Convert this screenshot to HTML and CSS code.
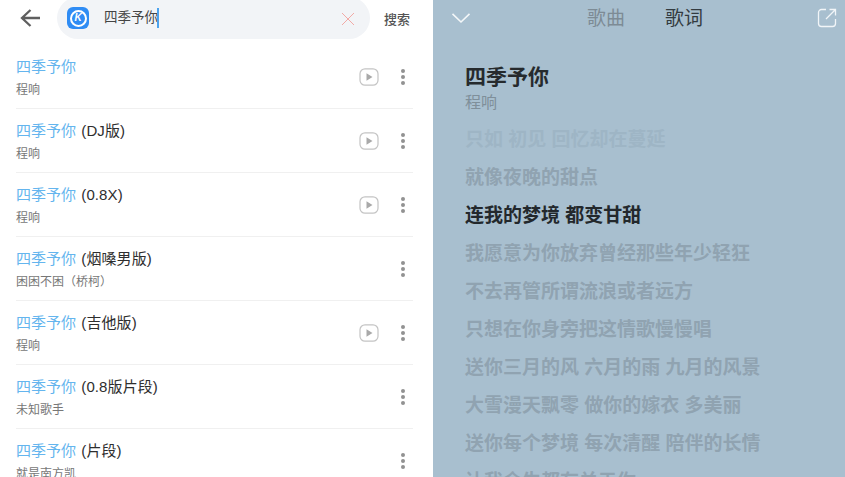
FILE: index.html
```html
<!DOCTYPE html>
<html lang="zh">
<head>
<meta charset="utf-8">
<title>四季予你</title>
<link rel="stylesheet" href="styles.css">
</head>
<body>
<div class="app">
  <section class="left">
    <header class="topbar">
      <svg class="back" width="22" height="20" viewBox="0 0 22 20"><path d="M20 10H2M10.500 2 2 10l8.500 8" fill="none" stroke="#5f5f5f" stroke-width="2.300"/></svg>
      <div class="search">
        <span class="logo"><span class="logo-ring"><span class="logo-k">K</span></span></span>
        <span class="query">四季予你</span><span class="caret"></span>
        <svg class="clear" width="14" height="14" viewBox="0 0 14 14"><path d="M1 1l12 12M13 1 1 13" stroke="#f2aaa6" stroke-width="1" fill="none"/></svg>
      </div>
      <span class="go">搜索</span>
    </header>
    <ul class="list">
      <li class="row">
        <div class="info"><div class="title"><em>四季予你</em></div><div class="artist">程响</div></div>
        <svg class="play" width="20" height="18" viewBox="0 0 20 18"><rect x="1" y="0.800" width="18" height="16.400" rx="5" fill="none" stroke="#c4c4c4" stroke-width="1.200"/><path d="M7.500 5.200v7.600L13.500 9z" fill="#a9a9a9"/></svg>
        <span class="more"><i></i><i></i><i></i></span>
      </li>
      <li class="row">
        <div class="info"><div class="title"><em>四季予你</em> (DJ版)</div><div class="artist">程响</div></div>
        <svg class="play" width="20" height="18" viewBox="0 0 20 18"><rect x="1" y="0.800" width="18" height="16.400" rx="5" fill="none" stroke="#c4c4c4" stroke-width="1.200"/><path d="M7.500 5.200v7.600L13.500 9z" fill="#a9a9a9"/></svg>
        <span class="more"><i></i><i></i><i></i></span>
      </li>
      <li class="row">
        <div class="info"><div class="title"><em>四季予你</em> (0.8X)</div><div class="artist">程响</div></div>
        <svg class="play" width="20" height="18" viewBox="0 0 20 18"><rect x="1" y="0.800" width="18" height="16.400" rx="5" fill="none" stroke="#c4c4c4" stroke-width="1.200"/><path d="M7.500 5.200v7.600L13.500 9z" fill="#a9a9a9"/></svg>
        <span class="more"><i></i><i></i><i></i></span>
      </li>
      <li class="row">
        <div class="info"><div class="title"><em>四季予你</em> (烟嗓男版)</div><div class="artist">困困不困（桥柯）</div></div>
        <span class="more"><i></i><i></i><i></i></span>
      </li>
      <li class="row">
        <div class="info"><div class="title"><em>四季予你</em> (吉他版)</div><div class="artist">程响</div></div>
        <svg class="play" width="20" height="18" viewBox="0 0 20 18"><rect x="1" y="0.800" width="18" height="16.400" rx="5" fill="none" stroke="#c4c4c4" stroke-width="1.200"/><path d="M7.500 5.200v7.600L13.500 9z" fill="#a9a9a9"/></svg>
        <span class="more"><i></i><i></i><i></i></span>
      </li>
      <li class="row">
        <div class="info"><div class="title"><em>四季予你</em> (0.8版片段)</div><div class="artist">未知歌手</div></div>
        <span class="more"><i></i><i></i><i></i></span>
      </li>
      <li class="row">
        <div class="info"><div class="title"><em>四季予你</em> (片段)</div><div class="artist">就是南方凯</div></div>
        <span class="more"><i></i><i></i><i></i></span>
      </li>
    </ul>
  </section>
  <section class="right">
    <header class="tabs">
      <svg class="down" width="20" height="12" viewBox="0 0 20 12"><path d="M1.500 1.800 10 10l8.500-8.200" fill="none" stroke="#f4f7f9" stroke-width="1.600"/></svg>
      <nav class="tabset"><span class="tab">歌曲</span><span class="tab on">歌词</span></nav>
      <svg class="share" width="20" height="20" viewBox="0 0 20 20"><path d="M9 1.500H4.500a3 3 0 0 0-3 3v11a3 3 0 0 0 3 3h11a3 3 0 0 0 3-3V11M9 11 18 2M12.500 1.500h6v6" fill="none" stroke="#f1f5f8" stroke-width="1.300"/></svg>
    </header>
    <h1 class="song">四季予你</h1>
    <p class="singer">程响</p>
    <div class="lyrics">
      <p class="line first">只如 初见 回忆却在蔓延</p>
      <p class="line">就像夜晚的甜点</p>
      <p class="line now">连我的梦境 都变甘甜</p>
      <p class="line">我愿意为你放弃曾经那些年少轻狂</p>
      <p class="line">不去再管所谓流浪或者远方</p>
      <p class="line">只想在你身旁把这情歌慢慢唱</p>
      <p class="line">送你三月的风 六月的雨 九月的风景</p>
      <p class="line">大雪漫天飘零 做你的嫁衣 多美丽</p>
      <p class="line">送你每个梦境 每次清醒 陪伴的长情</p>
      <p class="line">让我余生都有关于你</p>
    </div>
  </section>
</div>
</body>
</html>
```
FILE: styles.css
```css
* { box-sizing: border-box; margin: 0; padding: 0; }
html, body { width: 845px; height: 477px; overflow: hidden; background: #fff; }
body { font-family: "Liberation Sans", "Noto Sans CJK SC", sans-serif; }
.app { display: flex; width: 845px; height: 477px; overflow: hidden; }

.left { width: 433px; height: 477px; overflow: hidden; background: #fff; }
.topbar { display: flex; align-items: center; height: 40px; padding-left: 20px; margin-top: -2px; }
.back { flex: none; margin-right: 15px; }
.search { display: flex; align-items: center; width: 313px; height: 42px; border-radius: 21px; background: #f2f4f7; padding-left: 10px; position: relative; }
.logo { width: 22px; height: 22px; border-radius: 6px; background: #2f8cf4; display: flex; align-items: center; justify-content: center; flex: none; }
.logo-ring { width: 17px; height: 17px; border: 2px solid #fff; border-radius: 50%; display: flex; align-items: center; justify-content: center; }
.logo-k { font: italic bold 10px/1 "Liberation Sans", sans-serif; color: #fff; }
.query { margin-left: 15px; font-size: 13.500px; line-height: 18px; color: #444; }
.caret { width: 2px; height: 20px; background: #4ca3ee; flex: none; margin-left: -1px; }
.clear { position: absolute; right: 15px; top: 15px; }
.go { margin-left: 14px; font-size: 13px; font-weight: 500; color: #555; white-space: nowrap; }

.list { list-style: none; margin: 7px 20px 0 16px; }
.row { display: flex; align-items: center; height: 64px; border-bottom: 1px solid #f0f0f0; }
.info { flex: 1; min-width: 0; padding-top: 2px; }
.title { font-size: 15px; line-height: 20px; color: #2e2e2e; white-space: nowrap; word-spacing: 1px; letter-spacing: 0.100px; }
.title em { font-style: normal; color: #64b5ee; letter-spacing: 0; }
.artist { margin-top: 5px; font-size: 12px; line-height: 16px; color: #777; white-space: nowrap; }
.play { flex: none; margin-right: 14px; position: relative; left: -8px; }
.more { flex: none; display: flex; flex-direction: column; gap: 2px; width: 4px; margin-right: 8px; }
.more i { display: block; width: 4px; height: 4px; border-radius: 50%; background: #929292; }

.right { position: relative; width: 412px; height: 477px; overflow: hidden; background: #a8bfcf; padding-left: 32px; }
.tabs { position: relative; display: flex; justify-content: center; align-items: center; height: 36px; margin-left: -32px; padding-left: 12px; }
.down { position: absolute; left: 18px; top: 12px; }
.share { position: absolute; right: 8px; top: 8px; }
.tabset { display: flex; gap: 40px; padding-top: 2px; }
.tab { font-size: 19px; line-height: 24px; color: #7d8b95; }
.tab.on { color: #333b40; }
.song { margin-top: 28px; font-size: 21px; line-height: 26px; font-weight: 700; color: #262a2d; }
.singer { margin-top: 3px; font-size: 16px; line-height: 20px; color: #7f8f9a; }
.lyrics { margin-top: 14px; }
.line { height: 38px; font-size: 19px; line-height: 26px; font-weight: 700; color: #90a3b1; white-space: nowrap; }
.line.first { color: #9eb5c5; }
.line.now { color: #23282c; }
```
